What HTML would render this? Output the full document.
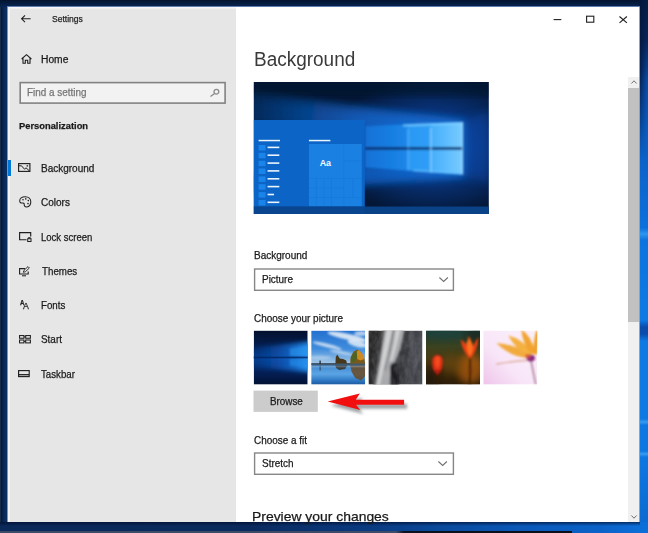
<!DOCTYPE html>
<html><head><meta charset="utf-8">
<style>
*{margin:0;padding:0;box-sizing:border-box}
html,body{width:648px;height:533px;overflow:hidden}
body{position:relative;background:#0b2c5e;font-family:"Liberation Sans",sans-serif;color:#1a1a1a}
.a{position:absolute}
.t{position:absolute;white-space:nowrap;line-height:1;transform-origin:0 0;display:block;-webkit-text-stroke:.25px currentColor}
#desk-left{left:0;top:0;width:8px;height:533px;background:linear-gradient(90deg,#2a3a50 0,#04193c 1.2px,#0a2a5c 4px,#0c2f63 8px)}
#desk-top{left:0;top:0;width:648px;height:7px;background:linear-gradient(180deg,#03132e 0,#072552 7px)}
#desk-right{left:639px;top:0;width:9px;height:533px;background:linear-gradient(180deg,#051d45 0,#06265a 40px,#0a4aa4 80px,#0b5cc0 130px,#0c6ad4 200px,#0c70dc 228px,#2e96ee 234px,#0c74de 240px,#0d7ae4 320px,#0a4cac 327px,#0a4cac 334px,#0d7ae4 341px,#0d7ae4 419px,#3a9cf0 422px,#0d78e2 425px,#0d78e2 451px,#3a9cf0 454px,#0d78e2 457px,#0b68ce 533px)}
#desk-right-sh{left:639px;top:0;width:9px;height:160px;background:linear-gradient(90deg,rgba(4,22,60,.8) 1px,rgba(4,22,60,0) 8px);-webkit-mask-image:linear-gradient(180deg,#000 0,#000 70px,transparent 160px);mask-image:linear-gradient(180deg,#000 0,#000 70px,transparent 160px)}
#desk-bottom,#desk-bottom-shadow,#taskbar{left:0;top:531px;width:572px;height:2px;background:linear-gradient(90deg,#3c4c68 0,#3c4c68 396px,#0a1220 404px,#0a0f18 572px)}
#desk-bottom{left:0;top:522px;width:648px;height:11px;background:linear-gradient(90deg,#0a2858 0,#0a2a5e 250px,#0a3c84 380px,#0a4a9c 440px,#0a58b8 520px,#0a62c8 600px,#0c70da 648px)}
#desk-bottom-shadow{left:0;top:522px;width:640px;height:4px;background:linear-gradient(180deg,rgba(0,10,40,.65),rgba(0,10,40,0))}
#taskbar{left:0;top:531px;width:572px;height:2px;background:linear-gradient(90deg,#3c4c68 0,#3c4c68 396px,#0a1220 404px,#0a0f18 572px)}
#win{left:8px;top:7px;width:631px;height:515px;background:#fff}
#edge-l{left:7px;top:7px;width:1px;height:515px;background:#8592a8}
#edge-r{left:639px;top:7px;width:1px;height:515px;background:#85a3d0}
#edge-t{left:7px;top:6px;width:633px;height:1px;background:#5f7cae}
#side{left:8px;top:7px;width:228px;height:515px;background:#e6e6e6}
#side-l{left:8px;top:7px;width:2px;height:515px;background:#f4f4f4}
#side-t{left:8px;top:7px;width:228px;height:2px;background:linear-gradient(180deg,#f6f8fc,#ececee)}
#sel{left:8px;top:159.5px;width:2.6px;height:16px;background:#0078d7}
#search{left:19.5px;top:82.5px;width:205px;height:21px;border:1.3px solid #858585;background:#f1f1f1}
.dd{left:254px;width:200px;height:21.5px;border:1.3px solid #858585;background:#fff}
#browse{left:253.7px;top:390.7px;width:64px;height:21.2px;background:#cccccc}
#sb{left:628px;top:77px;width:11px;height:445px;background:#f0f0f0}
#sbthumb{left:628px;top:88px;width:11px;height:234px;background:#c1c1c1}
.thumb{top:330.5px;width:54px;height:54px;overflow:hidden}
svg{position:absolute;overflow:visible}
</style></head><body>
<div class="a" id="desk-left"></div>
<div class="a" id="desk-top"></div>
<div class="a" id="desk-right"></div>
<div class="a" id="desk-right-sh"></div>
<div class="a" id="desk-bottom"></div>
<div class="a" id="desk-bottom-shadow"></div>
<div class="a" id="taskbar"></div>
<div class="a" id="edge-t"></div>
<div class="a" id="win"></div>
<div class="a" id="edge-l"></div>
<div class="a" id="edge-r"></div>
<div class="a" id="side"></div>
<div class="a" id="side-l"></div>
<div class="a" id="side-t"></div>
<div class="a" id="sel"></div>
<svg id="boxes" style="left:0;top:0" width="648" height="533" viewBox="0 0 648 533">
<rect x="20.200" y="82.600" width="204.900" height="20.500" fill="#f2f2f2" stroke="#828282" stroke-width="1.600"/>
<rect x="254.600" y="269" width="198.800" height="21.300" fill="#fff" stroke="#868686" stroke-width="1.400"/>
<rect x="253.500" y="390.600" width="64.300" height="21.300" fill="#cccccc"/>
<rect x="254.600" y="453" width="198.800" height="21.300" fill="#fff" stroke="#868686" stroke-width="1.400"/>
</svg>
<div class="a" id="sb"></div>
<div class="a" id="sbthumb"></div>
<!-- back arrow -->
<svg style="left:20.5px;top:14.5px" width="10" height="8" viewBox="0 0 10 8"><path d="M4 .4 L.6 3.800 L4 7.200 M.6 3.800 H9.600" fill="none" stroke="#1f1f1f" stroke-width="1.1"/></svg>
<!-- window controls -->
<svg style="left:553px;top:14px" width="54" height="10" viewBox="0 0 54 10">
<path d="M.6 5.600 H8.300" stroke="#1f1f1f" stroke-width="1.1" fill="none"/>
<rect x="33.600" y="2.200" width="7.200" height="6" fill="none" stroke="#1f1f1f" stroke-width="1.1"/>
<path d="M63 1.500" fill="none"/>
</svg>
<svg style="left:619px;top:15.500px" width="8.400" height="7.400" viewBox="0 0 8.400 7.400"><path d="M.5 .5 L7.900 6.900 M7.900 .5 L.5 6.900" stroke="#1f1f1f" stroke-width="1.100" fill="none"/></svg>
<!-- home -->
<svg style="left:20.500px;top:54px" width="11" height="10" viewBox="0 0 11 10"><path d="M.6 5 L5.500 .7 L10.400 5 M2 4 V9.300 H4.300 V6.200 H6.700 V9.300 H9 V4" fill="none" stroke="#1f1f1f" stroke-width="1.100"/></svg>
<!-- search -->
<svg style="left:210px;top:88px" width="10" height="10" viewBox="0 0 10 10"><circle cx="6.400" cy="3.700" r="2.400" fill="none" stroke="#8a8a8a" stroke-width="1.300"/><path d="M4.600 5.400 L.5 8.500" stroke="#8a8a8a" stroke-width="1.300" fill="none"/></svg>
<!-- background icon -->
<svg style="left:18.400px;top:162.700px" width="12.500" height="9" viewBox="0 0 12.500 9"><rect x=".6" y=".6" width="11.300" height="7.800" fill="none" stroke="#1f1f1f" stroke-width="1.150"/><path d="M1 2.800 L3.500 2.800 L6.500 6.200 L8 4.800 L11.500 8" fill="none" stroke="#1f1f1f" stroke-width="1"/><rect x="8.600" y="2.200" width="1.500" height="1.300" fill="#1f1f1f"/></svg>
<!-- colors (palette) -->
<svg style="left:18.800px;top:196.300px" width="12.500" height="12" viewBox="0 0 12.500 12"><path d="M6.300 .7 C2.800 .7 .7 2.700 .7 4.900 C.7 6.600 2 7.300 3.300 7 C4.600 6.700 5.300 7.400 5.200 8.500 C5.100 10 6.200 11.200 7.700 11 C10 10.700 11.800 8.600 11.800 5.800 C11.800 2.800 9.500 .7 6.300 .7 Z" fill="none" stroke="#1f1f1f" stroke-width="1.050"/><circle cx="4" cy="3.800" r=".8" fill="#1f1f1f"/><circle cx="6.800" cy="2.900" r=".8" fill="#1f1f1f"/><circle cx="9.300" cy="4.600" r=".8" fill="#1f1f1f"/><circle cx="9" cy="7.600" r=".8" fill="#1f1f1f"/></svg>
<!-- lock screen -->
<svg style="left:18.800px;top:232.200px" width="12.500" height="10" viewBox="0 0 12.500 10"><path d="M7.500 7.700 H.6 V.6 H11.700 V4.500" fill="none" stroke="#1f1f1f" stroke-width="1.150"/><rect x="8.700" y="6.700" width="3.300" height="2.800" fill="none" stroke="#1f1f1f" stroke-width="1"/><path d="M9.400 6.600 V5.600 H11.300 V6.600" fill="none" stroke="#1f1f1f" stroke-width=".9"/></svg>
<!-- themes -->
<svg style="left:18.800px;top:266px" width="11.500" height="10.500" viewBox="0 0 11.500 10.500"><path d="M6 2.600 H.6 V8 H9.200 V5.500" fill="none" stroke="#1f1f1f" stroke-width="1.100"/><path d="M3 9.800 H7" stroke="#1f1f1f" stroke-width="1"/><path d="M4.300 6.300 L5 4.300 L9 .6 L10.400 2 L6.300 5.800 Z" fill="none" stroke="#1f1f1f" stroke-width=".9"/></svg>
<!-- start -->
<svg style="left:18.800px;top:335px" width="12" height="8.500" viewBox="0 0 12 8.500"><rect x=".55" y=".55" width="4.400" height="2.700" fill="none" stroke="#1f1f1f" stroke-width="1.050"/><rect x="6.700" y=".55" width="4.700" height="2.700" fill="none" stroke="#1f1f1f" stroke-width="1.050"/><rect x=".55" y="5" width="4.400" height="2.900" fill="none" stroke="#1f1f1f" stroke-width="1.050"/><rect x="6.700" y="5" width="4.700" height="2.900" fill="none" stroke="#1f1f1f" stroke-width="1.050"/><path d="M4.900 1.900 H6.700 M4.900 6.400 H6.700" stroke="#1f1f1f" stroke-width="1"/></svg>
<!-- taskbar -->
<svg style="left:18.400px;top:369.500px" width="12" height="7.500" viewBox="0 0 12 7.500"><rect x=".6" y=".6" width="10.600" height="6" fill="none" stroke="#1f1f1f" stroke-width="1.150"/><path d="M.6 4.700 H11.200" stroke="#1f1f1f" stroke-width="1.300"/></svg>
<!-- dropdown chevrons -->
<svg style="left:438.500px;top:277px" width="9.300" height="5" viewBox="0 0 9.300 5"><path d="M.4 .5 L4.650 4.400 L8.900 .5" fill="none" stroke="#707070" stroke-width="1.100"/></svg>
<svg style="left:437.900px;top:461px" width="9.300" height="5" viewBox="0 0 9.300 5"><path d="M.4 .5 L4.650 4.400 L8.900 .5" fill="none" stroke="#707070" stroke-width="1.100"/></svg>
<!-- scrollbar arrows -->
<svg style="left:630.500px;top:80px" width="6" height="4" viewBox="0 0 6 4"><path d="M.4 3.500 L3 .8 L5.600 3.500" fill="none" stroke="#606060" stroke-width=".9"/></svg>
<svg style="left:630.500px;top:515px" width="6" height="4" viewBox="0 0 6 4"><path d="M.4 .5 L3 3.200 L5.600 .5" fill="none" stroke="#606060" stroke-width=".9"/></svg>
<!-- fonts icon -->
<span class="t" style="left:19.600px;top:300px;font-size:6.800px;font-weight:bold;color:#1f1f1f;transform:scaleX(.9)">A</span>
<span class="t" style="left:23.300px;top:301.300px;font-size:9.600px;color:#1f1f1f;transform:scaleX(.92)">A</span>

<svg id="previewwrap" style="left:0;top:0" width="648" height="533" viewBox="0 0 648 533"><svg id="preview" x="253.600" y="82" width="235.300" height="132" viewBox="0 0 236 132" preserveAspectRatio="none" style="position:static;overflow:hidden">
<defs>
<clipPath id="pc"><rect x="0" y="0" width="236" height="132"/></clipPath>
<radialGradient id="pg1" cx="180" cy="64" r="105" gradientUnits="userSpaceOnUse" gradientTransform="translate(0 22) scale(1 .66)">
<stop offset="0" stop-color="#0c52b4"/><stop offset=".5" stop-color="#08337a"/><stop offset="1" stop-color="#041736"/></radialGradient>
<linearGradient id="pg2" x1="112" y1="0" x2="210" y2="0" gradientUnits="userSpaceOnUse">
<stop offset="0" stop-color="#1270d6"/><stop offset=".42" stop-color="#1c86e8"/><stop offset=".44" stop-color="#2a98f4"/><stop offset=".66" stop-color="#2f9ef6"/><stop offset=".68" stop-color="#45aefc"/><stop offset="1" stop-color="#7accff"/></linearGradient>
<linearGradient id="pg3" x1="0" y1="0" x2="210" y2="0" gradientUnits="userSpaceOnUse">
<stop offset="0" stop-color="#0d5cc4" stop-opacity=".15"/><stop offset=".5" stop-color="#0f62c8" stop-opacity=".7"/><stop offset="1" stop-color="#1a80e8" stop-opacity=".85"/></linearGradient>
<linearGradient id="pg4" x1="0" y1="0" x2="210" y2="0" gradientUnits="userSpaceOnUse"><stop offset="0" stop-color="#1468d0" stop-opacity=".1"/><stop offset=".5" stop-color="#1468d0" stop-opacity=".4"/><stop offset="1" stop-color="#1468d0" stop-opacity=".5"/></linearGradient>
<filter id="pb6" x="-20%" y="-50%" width="140%" height="200%"><feGaussianBlur stdDeviation="5"/></filter>
<filter id="pb1" x="-5%" y="-10%" width="110%" height="120%"><feGaussianBlur stdDeviation="0.9"/></filter>
<filter id="pb3" x="-20%" y="-20%" width="140%" height="140%"><feGaussianBlur stdDeviation="3"/></filter>
</defs>
<g clip-path="url(#pc)">
<rect width="236" height="132" fill="url(#pg1)"/>
<rect width="236" height="14" fill="#03122c" opacity=".55" filter="url(#pb3)"/>
<polygon points="-10,14 212,40 212,94 -10,112" fill="url(#pg3)" filter="url(#pb6)"/>
<polygon points="205,40 236,30 236,100 205,94" fill="#0c4aa8" opacity=".5" filter="url(#pb6)"/>
<polygon points="-10,8 210,38 210,48 -10,40" fill="url(#pg4)" filter="url(#pb3)"/>
<polygon points="-10,112 210,94 210,84 -10,92" fill="#1060c8" opacity=".35" filter="url(#pb3)"/>
<g filter="url(#pb1)">
<polygon points="112,44 210,40 210,65.2 112,65.2" fill="url(#pg2)"/>
<polygon points="112,67.6 210,67.6 210,92.5 112,85.5" fill="url(#pg2)"/>
<rect x="112" y="65.2" width="98" height="2.4" fill="#0a2c66"/>
<rect x="177" y="46" width="1.6" height="45" fill="#8fd4ff" opacity=".8"/>
<rect x="154.5" y="47" width="1" height="41" fill="#7cc8ff" opacity=".6"/>
<polygon points="150,42.3 210,40 210,42.5 150,44.5" fill="#7fd0ff" opacity=".7"/>
<polygon points="160,87.6 210,90.5 210,92.8 160,89.6" fill="#6ac4ff" opacity=".6"/>
<rect x="208.6" y="40" width="1.6" height="52" fill="#9adaff" opacity=".8"/>
</g>
<!-- start menu -->
<rect x="0" y="38" width="111.5" height="87" fill="#0b64c6"/>
<rect x="55.5" y="62" width="53" height="62.5" fill="#1a80e2"/>
<g stroke="#0f70d4" stroke-width=".7" opacity=".45">
<path d="M90.5 62V124.5M55.5 96.5H108.500M90.5 79H108.5M63 96.500V124.5M70.500 96.500V124.5M78 96.500V124.5M55.500 106H90.500M55.500 115.500H108.500M99.500 96.500V115.500"/>
</g>
<g fill="#1a84ea"><rect x="5" y="63" width="7" height="5.5"/><rect x="5" y="70.800" width="7" height="5.500"/><rect x="5" y="78.700" width="7" height="5.500"/><rect x="5" y="86.500" width="7" height="5.500"/><rect x="5" y="94.400" width="7" height="5.500"/><rect x="5" y="102.200" width="7" height="5.500"/><rect x="5" y="110.100" width="7" height="5.500"/><rect x="5" y="118" width="7" height="5.5"/></g>
<g fill="#eaf4ff">
<rect x="5" y="57.800" width="21.500" height="1.500"/>
<rect x="55.500" y="57.800" width="21.500" height="1.500"/>
<rect x="14" y="64.600" width="11.800" height="1.600"/><rect x="14" y="72.400" width="11.800" height="1.600"/><rect x="14" y="80.300" width="11.800" height="1.600"/><rect x="14" y="88.100" width="11.800" height="1.600"/><rect x="14" y="96" width="11.800" height="1.600"/><rect x="14" y="103.800" width="11.800" height="1.600"/><rect x="14" y="111.700" width="6.500" height="1.600"/><rect x="14" y="119.500" width="11.800" height="1.600"/>
</g>
<text x="72" y="84.500" font-family="Liberation Sans, sans-serif" font-size="9" font-weight="bold" fill="#f4f9ff" text-anchor="middle" textLength="11.500" lengthAdjust="spacingAndGlyphs">Aa</text>
<!-- taskbar -->
<rect x="0" y="124.500" width="236" height="7.500" fill="#0a4288"/>
<rect x="0" y="124.500" width="111.500" height="7.500" fill="#0a4a96" opacity=".6"/>
</g>
</svg></svg>

<svg width="0" height="0" style="left:0;top:0"><defs>
<filter id="b1" x="-30%" y="-30%" width="160%" height="160%"><feGaussianBlur stdDeviation="1"/></filter>
<filter id="b2" x="-30%" y="-30%" width="160%" height="160%"><feGaussianBlur stdDeviation="2"/></filter>
<filter id="b3" x="-40%" y="-40%" width="180%" height="180%"><feGaussianBlur stdDeviation="3.500"/></filter>
<filter id="b05" x="-30%" y="-30%" width="160%" height="160%"><feGaussianBlur stdDeviation=".55"/></filter>
<clipPath id="tc"><rect width="54" height="54"/></clipPath>
</defs></svg>
<svg id="thumbs" style="left:0;top:0" width="648" height="533" viewBox="0 0 648 533">
<!-- thumb 1: windows hero -->
<svg id="th1" x="253.700" y="330.600" width="54" height="54" viewBox="0 0 54 54" style="position:static;overflow:hidden">
<defs><linearGradient id="t1a" x1="0" y1="0" x2="0" y2="54" gradientUnits="userSpaceOnUse"><stop offset="0" stop-color="#03102e"/><stop offset=".28" stop-color="#041c4c"/><stop offset=".52" stop-color="#083886"/><stop offset=".78" stop-color="#041f55"/><stop offset="1" stop-color="#031235"/></linearGradient>
<linearGradient id="t1b" x1="0" y1="0" x2="54" y2="0" gradientUnits="userSpaceOnUse"><stop offset="0" stop-color="#0a4aa8" stop-opacity=".25"/><stop offset=".55" stop-color="#0f62c8" stop-opacity=".7"/><stop offset="1" stop-color="#2590f0" stop-opacity=".95"/></linearGradient></defs>
<g clip-path="url(#tc)">
<rect width="54" height="54" fill="url(#t1a)"/>
<polygon points="-4,17 58,11 58,42 -4,36" fill="url(#t1b)" filter="url(#b2)"/>
<polygon points="36,18 58,15 58,25.500 36,25.500" fill="#2f9ff8" opacity=".5" filter="url(#b1)"/>
<polygon points="36,28.500 58,28.500 58,38 36,35" fill="#2a98f4" opacity=".45" filter="url(#b1)"/>
<rect x="-2" y="26" width="58" height="1.700" fill="#06245c" opacity=".75" filter="url(#b05)"/>
</g></svg>
<!-- thumb 2: beach -->
<svg id="th2" x="311.200" y="330.600" width="54" height="54" viewBox="0 0 54 54" style="position:static;overflow:hidden">
<defs><linearGradient id="t2a" x1="0" y1="0" x2="0" y2="33" gradientUnits="userSpaceOnUse"><stop offset="0" stop-color="#2470d0"/><stop offset=".55" stop-color="#3f8cdc"/><stop offset="1" stop-color="#a4c8e6"/></linearGradient>
<linearGradient id="t2b" x1="0" y1="33" x2="0" y2="54" gradientUnits="userSpaceOnUse"><stop offset="0" stop-color="#4a6a88"/><stop offset=".18" stop-color="#4a90d4"/><stop offset=".5" stop-color="#5aa4e4"/><stop offset=".8" stop-color="#2f78c4"/><stop offset="1" stop-color="#1c5aa0"/></linearGradient></defs>
<g clip-path="url(#tc)">
<rect width="54" height="33.500" fill="url(#t2a)"/>
<rect y="33" width="54" height="21" fill="url(#t2b)"/>
<g filter="url(#b1)" fill="#eef3f8">
<ellipse cx="36" cy="6" rx="20" ry="3" opacity=".85" transform="rotate(12 36 6)"/><ellipse cx="46" cy="13" rx="10" ry="3.200" opacity=".8" transform="rotate(14 46 13)"/><ellipse cx="16" cy="15" rx="15" ry="1.800" opacity=".75" transform="rotate(14 16 15)"/><ellipse cx="30" cy="22" rx="12" ry="1.600" opacity=".55" transform="rotate(10 30 22)"/><ellipse cx="50" cy="3" rx="7" ry="2.500" opacity=".7"/><ellipse cx="8" cy="27" rx="12" ry="2" opacity=".35"/>
</g>
<g filter="url(#b05)" transform="translate(0 1.500)">
<rect x="0" y="31" width="54" height="1.600" fill="#3d5060"/>
<polygon points="24.200,31.500 24.600,25 26,22.500 28.500,26.500 32,27 35,28.500 35.800,31.500" fill="#46391e"/>
<polygon points="39,31.500 39.500,25 42.500,19.500 46,17.500 50,20.500 53,26 54,31.500" fill="#7a5a1c"/>
<polygon points="45,20 47.500,18 51,21.500 53.500,27 49,28.500 46,27" fill="#d08a22"/>
<polygon points="39.500,27 42,21.500 45.500,19 46,26 43,30 40,30.500" fill="#4f6424"/>
<polygon points="24.200,33.500 35.800,33.500 34,37 28,38 25,36" fill="#33291a" opacity=".8"/>
<polygon points="39,33.500 54,33.500 54,44 50,48.500 44,46 40.500,40" fill="#6a461c" opacity=".8"/>
<rect x="8.300" y="28.500" width="1.200" height="3.300" fill="#1c2028"/>
<rect x="8.300" y="33.500" width="1.200" height="5" fill="#22303e" opacity=".7"/>
<path d="M0 34.200 H54 V35.200 H0Z" fill="#cfe2f2" opacity=".35"/>
</g></g></svg>
<!-- thumb 3: rock -->
<svg id="th3" x="368.500" y="330.600" width="54" height="54" viewBox="0 0 54 54" style="position:static;overflow:hidden">
<defs><linearGradient id="t3a" x1="0" y1="0" x2="54" y2="0" gradientUnits="userSpaceOnUse"><stop offset="0" stop-color="#2a2a2c"/><stop offset=".25" stop-color="#3c3c3e"/><stop offset=".62" stop-color="#36373c"/><stop offset="1" stop-color="#45474e"/></linearGradient>
<filter id="nz" x="0" y="0" width="100%" height="100%"><feTurbulence type="fractalNoise" baseFrequency=".22 .12" numOctaves="3" seed="4"/><feColorMatrix type="matrix" values="0 0 0 0 .5  0 0 0 0 .5  0 0 0 0 .5  1.600 0 0 0 -.45"/></filter></defs>
<g clip-path="url(#tc)">
<rect width="54" height="54" fill="url(#t3a)"/>
<g filter="url(#b1)">
<polygon points="15,-1 36,-1 32,18 27,31 22,34 21,56 5,56 10,36 13,18" fill="#b4b5b8" opacity=".9"/>
<polygon points="18,-1 24,-1 17,30 11,56 8,56 13,28" fill="#e2e2e4" opacity=".7"/>
<polygon points="27,-1 32,-1 28,16 24,30 21,31 25,14" fill="#ececec" opacity=".6"/>
<polygon points="14,-1 17,-1 11,34 7,56 4,56 9,30" fill="#4a4a4c" opacity=".75"/>
<polygon points="24,-1 26.500,-1 21,26 17,40 15.500,40 20,22" fill="#6a6a6e" opacity=".55"/>
<path d="M21.500 56 V39 Q22 32 26.500 32 Q30.500 32.500 30.500 39 V56Z" fill="#1e1e20"/>
<polygon points="40,4 46,2 50,20 48,40 42,54 38,40 41,22" fill="#5a5c64" opacity=".35"/>
<polygon points="0,0 10,0 6,30 0,54" fill="#202022" opacity=".55"/>
</g>
<rect width="54" height="54" filter="url(#nz)" opacity=".22"/>
</g></svg>
<!-- thumb 4: tulips -->
<svg id="th4" x="426" y="330.600" width="54" height="54" viewBox="0 0 54 54" style="position:static;overflow:hidden">
<defs><linearGradient id="t4a" x1="0" y1="0" x2="0" y2="54" gradientUnits="userSpaceOnUse"><stop offset="0" stop-color="#1c3832"/><stop offset=".28" stop-color="#3a4220"/><stop offset=".6" stop-color="#4e3810"/><stop offset="1" stop-color="#2c1c08"/></linearGradient></defs>
<g clip-path="url(#tc)">
<rect width="54" height="54" fill="url(#t4a)"/>
<ellipse cx="44" cy="38" rx="13" ry="15" fill="#b05c0c" opacity=".7" filter="url(#b3)"/>
<ellipse cx="26" cy="33" rx="10" ry="9" fill="#6a4810" opacity=".55" filter="url(#b3)"/>
<ellipse cx="5" cy="46" rx="8" ry="12" fill="#1e1608" opacity=".6" filter="url(#b3)"/>
<ellipse cx="18" cy="3" rx="22" ry="6" fill="#1e4a44" opacity=".6" filter="url(#b3)"/>
<ellipse cx="50" cy="6" rx="8" ry="8" fill="#15201a" opacity=".6" filter="url(#b3)"/>
<g filter="url(#b1)">
<path d="M44 26 Q45 40 43.500 54" stroke="#3a1c06" stroke-width="1.500" fill="none"/>
<path d="M11.500 42 Q12 48 11.500 54" stroke="#3a1c06" stroke-width="1.200" fill="none"/>
<path d="M34.500 9 Q37 22 44 28 Q51.500 21 52.500 6.500 Q49 11 47 16 Q45.500 10 42.500 5 Q41.500 11 41 15 Q38.500 11 34.500 9Z" fill="#ee3e12"/>
<path d="M40.500 12 Q40.500 21 44 26 Q47.500 20 46.500 14 Q45 11 42.800 7 Q42 11 40.500 12Z" fill="#ff7a22" opacity=".85"/>
<path d="M6.500 28 Q5 40 11.500 44.500 Q17.500 40 16.500 28 Q14 23.500 11.500 24.500 Q9 23.500 6.500 28Z" fill="#e02e14"/>
<path d="M9 27 Q8.500 35 11.500 38 Q14.500 34 14 26.500 Q11.500 25 9 27Z" fill="#ff5a24" opacity=".7"/>
<path d="M7 38 Q9 44 11.500 44.500 Q15 43 16 38 Q11.500 42 7 38Z" fill="#8a1408" opacity=".6"/>
</g></g></svg>
<!-- thumb 5: flower -->
<svg id="th5" x="483.300" y="330.600" width="54" height="54" viewBox="0 0 54 54" style="position:static;overflow:hidden">
<defs><linearGradient id="t5a" x1="54" y1="0" x2="0" y2="54" gradientUnits="userSpaceOnUse"><stop offset="0" stop-color="#fbf0fb"/><stop offset=".6" stop-color="#f8e6f8"/><stop offset="1" stop-color="#efc4ea"/></linearGradient></defs>
<g clip-path="url(#tc)">
<rect width="54" height="54" fill="url(#t5a)"/>
<g filter="url(#b1)">
<path d="M47.500 29 Q50 42 52.500 54" stroke="#9a6a80" stroke-width="1.300" fill="none"/>
<path d="M46 29.500 Q30 30.500 13 33.500" stroke="#dba08e" stroke-width="1.200" fill="none"/>
<path d="M46 27.500 Q28 27 13 12.500 Q28 13 47 23Z" fill="#f2aa3c"/>
<path d="M46 25.500 Q32 19 25 5 Q38 8 50 22Z" fill="#f4b040"/>
<path d="M47.500 24 Q39 12 38 -1 Q48 5 52 22Z" fill="#f2a430"/>
<path d="M50 24 Q50 10 53 0 L56 0 L54 24Z" fill="#f0a028"/>
<ellipse cx="47.500" cy="27.500" rx="4.200" ry="3.400" fill="#8c2a7c"/>
<ellipse cx="44.500" cy="25.500" rx="3" ry="2" fill="#d85a3a" opacity=".8"/>
</g></g></svg>
</svg>

<svg id="arrow" style="left:320px;top:385px" width="100" height="36" viewBox="0 0 100 36">
<defs><filter id="ab" x="-10%" y="-40%" width="120%" height="180%"><feGaussianBlur stdDeviation="1.500"/></filter></defs>
<g transform="translate(3 4)" filter="url(#ab)" opacity=".5"><path d="M7.700 16.600 L39.800 8.600 L35.800 14.800 L84.100 14.800 L84.100 19.700 L36 19.700 L40.400 25.100Z" fill="#404850"/></g>
<path d="M7.700 16.600 L39.800 8.600 L35.800 14.800 L84.100 14.800 L84.100 19.700 L36 19.700 L40.400 25.100Z" fill="#f20f10"/>
</svg>

<span class="t" id="t-settings" style="left:52.0px;top:15.00px;font-size:9.0px;color:#1f1f1f;transform:scaleX(0.9471)">Settings</span>
<span class="t" id="t-home" style="left:41.4px;top:55.00px;font-size:10.0px;color:#1a1a1a;transform:scaleX(1.0267)">Home</span>
<span class="t" id="t-find" style="left:27.4px;top:88.00px;font-size:10.0px;color:#767676;transform:scaleX(0.9909)">Find a setting</span>
<span class="t" id="t-pers" style="left:19.1px;top:121.00px;font-size:9.5px;color:#1a1a1a;transform:scaleX(0.9834);font-weight:bold">Personalization</span>
<span class="t" id="t-n1" style="left:41.1px;top:163.00px;font-size:10.5px;color:#1a1a1a;transform:scaleX(0.9518)">Background</span>
<span class="t" id="t-n2" style="left:41.0px;top:197.00px;font-size:10.5px;color:#1a1a1a;transform:scaleX(0.9539)">Colors</span>
<span class="t" id="t-n3" style="left:40.7px;top:232.00px;font-size:10.5px;color:#1a1a1a;transform:scaleX(0.9050)">Lock screen</span>
<span class="t" id="t-n4" style="left:41.6px;top:266.00px;font-size:10.5px;color:#1a1a1a;transform:scaleX(0.9290)">Themes</span>
<span class="t" id="t-n5" style="left:40.5px;top:300.00px;font-size:10.5px;color:#1a1a1a;transform:scaleX(0.9269)">Fonts</span>
<span class="t" id="t-n6" style="left:40.8px;top:334.00px;font-size:10.5px;color:#1a1a1a;transform:scaleX(0.9440)">Start</span>
<span class="t" id="t-n7" style="left:41.4px;top:369.00px;font-size:10.5px;color:#1a1a1a;transform:scaleX(0.9233)">Taskbar</span>
<span class="t" id="t-title" style="left:254.1px;top:49.00px;font-size:20.0px;color:#3a3a3a;transform:scaleX(0.9489);-webkit-text-stroke:0">Background</span>
<span class="t" id="t-l1" style="left:253.8px;top:250.00px;font-size:10.5px;color:#1a1a1a;transform:scaleX(0.9518)">Background</span>
<span class="t" id="t-pic" style="left:261.9px;top:274.00px;font-size:10.5px;color:#1a1a1a;transform:scaleX(0.9467)">Picture</span>
<span class="t" id="t-l2" style="left:253.7px;top:313.00px;font-size:10.5px;color:#1a1a1a;transform:scaleX(0.9465)">Choose your picture</span>
<span class="t" id="t-browse" style="left:269.8px;top:396.00px;font-size:10.5px;color:#1a1a1a;transform:scaleX(0.9380)">Browse</span>
<span class="t" id="t-l3" style="left:253.7px;top:435.00px;font-size:10.5px;color:#1a1a1a;transform:scaleX(0.9464)">Choose a fit</span>
<span class="t" id="t-str" style="left:261.7px;top:458.00px;font-size:10.5px;color:#1a1a1a;transform:scaleX(0.9483)">Stretch</span>
<span class="t" id="t-prev" style="left:252.0px;top:510.00px;font-size:13.5px;color:#1a1a1a;transform:scaleX(1.0300)">Preview your changes</span>
</body></html>
